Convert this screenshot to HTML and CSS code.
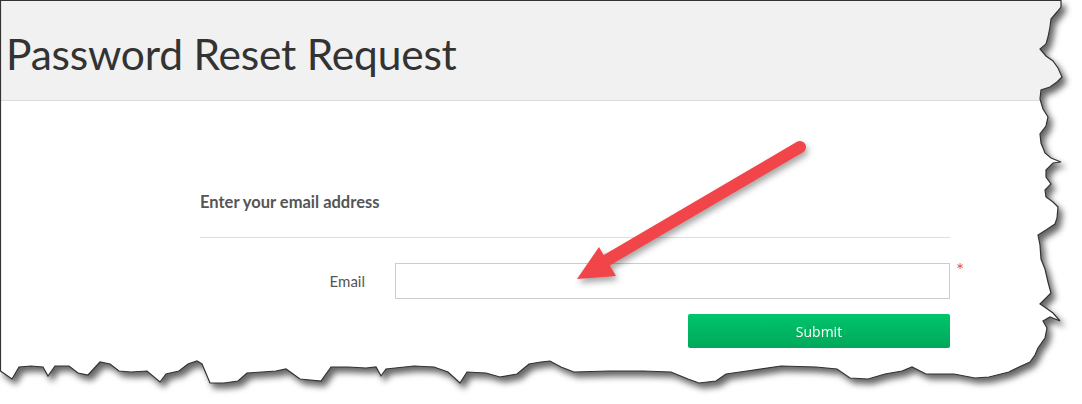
FILE: index.html
```html
<!DOCTYPE html>
<html lang="en">
<head>
    <meta charset="UTF-8">
    <meta name="viewport" content="width=device-width, initial-scale=1.0">
    <title>Password Reset Request</title>
    <link rel="stylesheet" href="styles.css">
</head>
<body>
    <div class="frame">
        <div class="sheet">
            <div class="page-head">
                <h1>Password Reset Request</h1>
            </div>

            <form class="reset-form" action="#" method="post">
                <h2>Enter your email address</h2>
                <div class="row">
                    <label for="email">Email</label>
                    <div class="field">
                        <input type="email" id="email" name="email">
                        <span class="required">*</span>
                    </div>
                </div>
                <div class="row">
                    <span></span>
                    <div class="actions">
                        <input type="submit" value="Submit">
                    </div>
                </div>
            </form>
        </div>

        <!-- torn paper outline, drawn over the sheet -->
        <svg class="edge" width="1082" height="404" viewBox="0 0 1082 404">
            <path d="M0.5,0.5 L1061,0.5 L1061,7 L1057,12 L1051,19 L1050,27 L1048,37 L1046,44 L1040,49 L1046,56 L1053,61 L1058,68 L1062,77 L1057,82 L1050,87 L1041,90 L1040,99 L1043,109 L1048,117 L1046,126 L1040,134 L1041,143 L1045,153 L1051,158 L1061,162 L1053,163 L1046,170 L1046,177 L1051,184 L1045,190 L1046,197 L1053,202 L1058,207 L1057,218 L1055,224 L1046,230 L1038,235 L1040,245 L1041,259 L1045,269 L1048,282 L1051,293 L1045,299 L1040,304 L1046,308 L1053,313 L1060,321 L1050,317 L1043,321 L1047,328 L1045,338 L1038,348 L1035,355 L1030,362 L1019,367 L1009,372 L989,377 L975,378 L954,374 L926,374 L912,367 L902,371 L885,374 L868,379 L850,378 L837,369 L816,367 L781,366 L747,371 L726,374 L716,381 L699,383 L688,379 L671,372 L643,371 L609,371 L574,372 L561,367 L550,361 L541,362 L529,364 L517,374 L500,377 L486,373 L467,372 L460,383 L448,372 L434,367 L414,366 L386,369 L381,376 L376,367 L366,368 L348,367 L331,367 L321,381 L300,379 L286,369 L276,371 L262,372 L247,373 L238,381 L224,383 L210,383 L202,364 L197,361 L188,364 L179,371 L166,374 L160,382 L147,371 L131,372 L119,371 L110,364 L100,362 L88,375 L78,373 L69,366 L55,366 L48,376 L43,367 L31,366 L19,367 L12,379 L0.5,371 Z"/>
        </svg>

        <svg class="arrow" width="1082" height="404" viewBox="0 0 1082 404">
            <line x1="800" y1="147" x2="602" y2="263"/>
            <polygon points="577,279 599,247 616,276"/>
        </svg>
    </div>
</body>
</html>
```

FILE: styles.css
```css
body {
    margin: 0;
    background: #fff;
    font-family: Lato, "Open Sans", sans-serif;
    color: #333;
}

.frame {
    position: relative;
    width: 1082px;
    height: 404px;
    filter: drop-shadow(4px 5px 3px rgba(0, 0, 0, 0.6));
}

.sheet {
    width: 1082px;
    height: 404px;
    background: #fff;
    clip-path: polygon(0 0, 1061px 0, 1061px 7px, 1057px 12px, 1051px 19px, 1050px 27px, 1048px 37px, 1046px 44px, 1040px 49px, 1046px 56px, 1053px 61px, 1058px 68px, 1062px 77px, 1057px 82px, 1050px 87px, 1041px 90px, 1040px 99px, 1043px 109px, 1048px 117px, 1046px 126px, 1040px 134px, 1041px 143px, 1045px 153px, 1051px 158px, 1061px 162px, 1053px 163px, 1046px 170px, 1046px 177px, 1051px 184px, 1045px 190px, 1046px 197px, 1053px 202px, 1058px 207px, 1057px 218px, 1055px 224px, 1046px 230px, 1038px 235px, 1040px 245px, 1041px 259px, 1045px 269px, 1048px 282px, 1051px 293px, 1045px 299px, 1040px 304px, 1046px 308px, 1053px 313px, 1060px 321px, 1050px 317px, 1043px 321px, 1047px 328px, 1045px 338px, 1038px 348px, 1035px 355px, 1030px 362px, 1019px 367px, 1009px 372px, 989px 377px, 975px 378px, 954px 374px, 926px 374px, 912px 367px, 902px 371px, 885px 374px, 868px 379px, 850px 378px, 837px 369px, 816px 367px, 781px 366px, 747px 371px, 726px 374px, 716px 381px, 699px 383px, 688px 379px, 671px 372px, 643px 371px, 609px 371px, 574px 372px, 561px 367px, 550px 361px, 541px 362px, 529px 364px, 517px 374px, 500px 377px, 486px 373px, 467px 372px, 460px 383px, 448px 372px, 434px 367px, 414px 366px, 386px 369px, 381px 376px, 376px 367px, 366px 368px, 348px 367px, 331px 367px, 321px 381px, 300px 379px, 286px 369px, 276px 371px, 262px 372px, 247px 373px, 238px 381px, 224px 383px, 210px 383px, 202px 364px, 197px 361px, 188px 364px, 179px 371px, 166px 374px, 160px 382px, 147px 371px, 131px 372px, 119px 371px, 110px 364px, 100px 362px, 88px 375px, 78px 373px, 69px 366px, 55px 366px, 48px 376px, 43px 367px, 31px 366px, 19px 367px, 12px 379px, 0 371px);
}

.page-head {
    height: 94px;
    background: #f1f1f1;
    border-bottom: 1px solid #dcdcdc;
    display: flex;
    align-items: center;
    padding: 6px 0 0 6px;
}

h1 {
    margin: 0;
    font-weight: 400;
    font-size: 42.5px;
    color: #333;
    letter-spacing: -0.2px;
}

.reset-form {
    width: 750px;
    margin-left: 200px;
    padding-top: 91px;
}

h2 {
    margin: 0;
    padding-bottom: 25px;
    border-bottom: 1px solid #dedede;
    font-size: 16.5px;
    font-weight: 700;
    color: #555;
}

.row {
    display: grid;
    grid-template-columns: 165px 555px;
    column-gap: 30px;
    align-items: center;
}

.row:nth-of-type(1) {
    margin-top: 25px;
}

label {
    text-align: right;
    font-size: 15px;
    color: #555;
}

.field {
    position: relative;
}

input[type="email"] {
    display: block;
    width: 100%;
    height: 36px;
    box-sizing: border-box;
    border: 1px solid #ccc;
    outline: none;
}

.required {
    position: absolute;
    left: 561px;
    top: -5px;
    color: #e8533a;
    font-size: 19px;
}

.actions {
    display: flex;
    justify-content: flex-end;
    margin-top: 15px;
}

input[type="submit"] {
    width: 262px;
    height: 34px;
    border: none;
    border-radius: 2px;
    background: linear-gradient(#00c56b, #00a85b);
    color: #fff;
    font-family: "Open Sans", sans-serif;
    font-size: 14px;
}

.edge,
.arrow {
    position: absolute;
    top: 0;
    left: 0;
    pointer-events: none;
}

.edge path {
    fill: none;
    stroke: #333;
    stroke-width: 1.2;
}

.arrow {
    filter: drop-shadow(2px 4px 3px rgba(0, 0, 0, 0.35));
}

.arrow line {
    stroke: #f2454a;
    stroke-width: 12;
    stroke-linecap: round;
}

.arrow polygon {
    fill: #f2454a;
}
```
